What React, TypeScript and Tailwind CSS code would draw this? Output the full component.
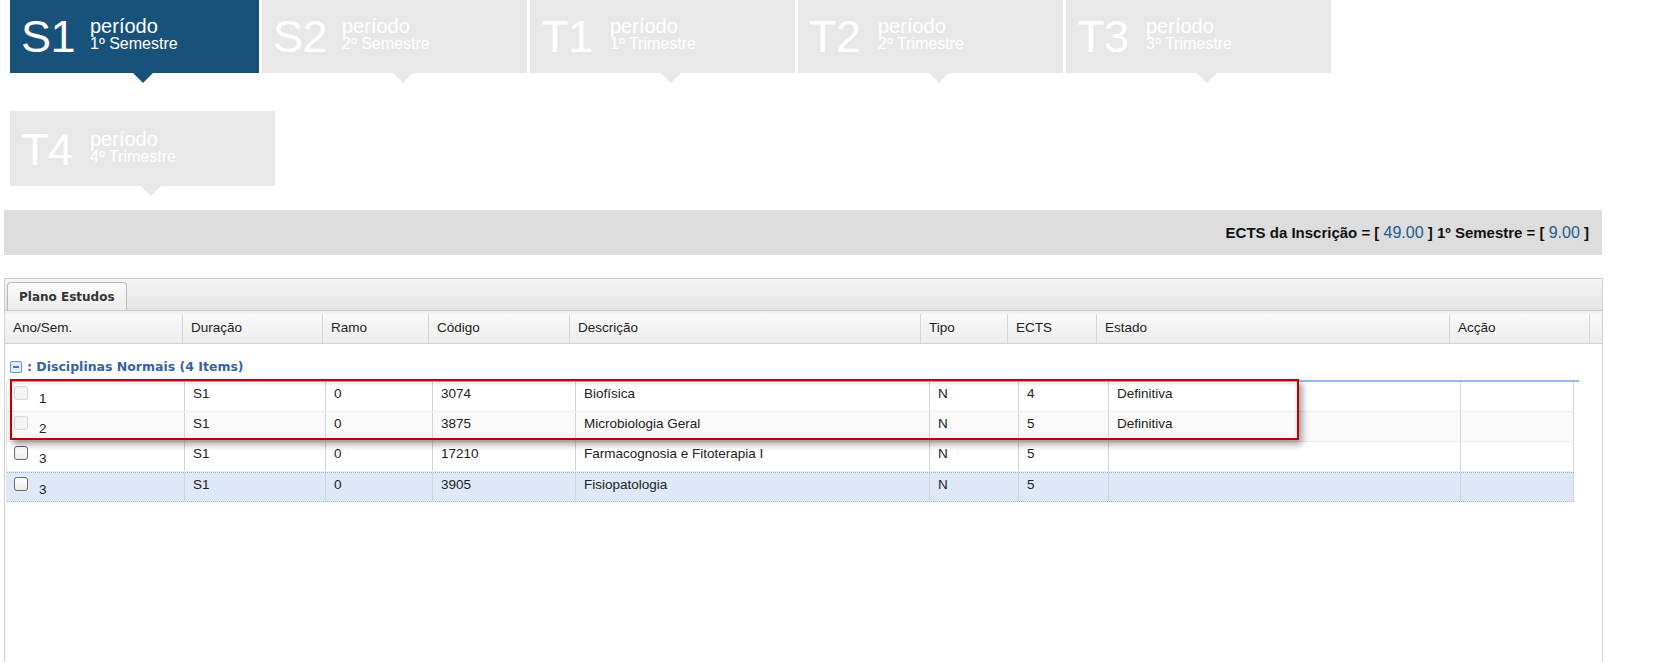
const periods = [
  { code: "S1", sub: "1º Semestre", active: true },
  { code: "S2", sub: "2º Semestre" },
  { code: "T1", sub: "1º Trimestre" },
  { code: "T2", sub: "2º Trimestre" },
  { code: "T3", sub: "3º Trimestre" },
  { code: "T4", sub: "4º Trimestre" },
];

const headerCols = [
  { label: "Ano/Sem.", w: "w-[178px]" },
  { label: "Duração", w: "w-[140px]" },
  { label: "Ramo", w: "w-[106px]" },
  { label: "Código", w: "w-[141px]" },
  { label: "Descrição", w: "w-[351px]" },
  { label: "Tipo", w: "w-[87px]" },
  { label: "ECTS", w: "w-[89px]" },
  { label: "Estado", w: "w-[353px]" },
  { label: "Acção", w: "w-[140px]" },
];

const bodyWidths = ["w-[178px]", "w-[141px]", "w-[107px]", "w-[143px]", "w-[354px]", "w-[89px]", "w-[90px]", "w-[352px]", "w-[113px]"];

const rows = [
  { ano: "1", dur: "S1", ramo: "0", cod: "3074", desc: "Biofísica", tipo: "N", ects: "4", estado: "Definitiva", locked: true, bg: "bg-white border-b border-[#ececec]" },
  { ano: "2", dur: "S1", ramo: "0", cod: "3875", desc: "Microbiologia Geral", tipo: "N", ects: "5", estado: "Definitiva", locked: true, bg: "bg-[#fafafa] border-b border-[#ececec]" },
  { ano: "3", dur: "S1", ramo: "0", cod: "17210", desc: "Farmacognosia e Fitoterapia I", tipo: "N", ects: "5", estado: "", locked: false, bg: "bg-white border-b border-[#ececec]" },
  { ano: "3", dur: "S1", ramo: "0", cod: "3905", desc: "Fisiopatologia", tipo: "N", ects: "5", estado: "", locked: false, bg: "bg-[#dfe8f6] border-y border-dotted border-[#8fb0e6]" },
];

function PeriodTab({ code, sub, active }: { code: string; sub: string; active?: boolean }) {
  const bg = active ? "bg-[#18527a]" : "bg-[#e8e8e8]";
  return (
    <div className={`relative h-[75px] ${active ? "w-[249px]" : "w-[265px]"} ${bg} flex items-center pl-[11px] text-white`}>
      <div className="w-[69px] text-[45px] leading-none tracking-[-0.5px] mt-[2px]">{code}</div>
      <div className="flex flex-col -mt-[3px]">
        <span className="text-[20px] leading-[18px]">período</span>
        <span className="text-[16px] leading-[17px]">{sub}</span>
      </div>
      <span
        className={`absolute top-full left-[calc(50%-2px)] w-0 h-0 border-l-[10px] border-r-[10px] border-t-[10px] border-l-transparent border-r-transparent ${
          active ? "border-t-[#18527a]" : "border-t-[#e8e8e8]"
        }`}
      />
    </div>
  );
}

function Checkbox({ locked }: { locked: boolean }) {
  return (
    <span
      className={`block w-[14px] h-[14px] rounded-[3px] border ${
        locked ? "border-[#d6d6d6] bg-[#f5f5f5]" : "border-[#6a6a6a] bg-gradient-to-b from-white to-[#ececec]"
      }`}
    />
  );
}

export default function App() {
  return (
    <div className="relative w-[1656px] h-[662px] overflow-hidden bg-white font-['Liberation_Sans',Arial,sans-serif]">
      {/* period tabs */}
      <div className="flex flex-wrap w-[1340px] pl-[10px] gap-x-[3px] gap-y-[38px] -mt-[2px]">
        {periods.map((p) => (
          <PeriodTab key={p.code} {...p} />
        ))}
      </div>

      {/* ECTS summary */}
      <div className="mt-[24px] ml-[4px] w-[1598px] h-[45px] bg-[#dddddd] flex items-center justify-end pr-[13px] text-[15px] font-bold text-[#111]">
        <span>
          ECTS da Inscrição = [ <span className="font-normal text-[16px] text-[#1f5a8a]">49.00</span> ] 1º Semestre = [{" "}
          <span className="font-normal text-[16px] text-[#1f5a8a]">9.00</span> ]
        </span>
      </div>

      {/* Plano Estudos panel */}
      <div className="mt-[23px] ml-[4px] w-[1599px] h-[420px] border border-[#d0d0d0]">
        <div className="h-[31px] bg-gradient-to-b from-[#f5f5f5] to-[#e4e4e4] flex items-end pl-[2px]">
          <div className="h-[28px] px-[11px] flex items-center border border-b-0 border-[#b9b9b9] rounded-t-[4px] bg-gradient-to-b from-[#fbfbfb] to-[#ececec] font-['DejaVu_Sans',Verdana,sans-serif] font-bold text-[12px] text-[#333]">
            Plano Estudos
          </div>
        </div>
        <div className="h-[4px] bg-[#f2f2f2] border-t border-[#c9c9c9]" />

        {/* header */}
        <div className="flex h-[30px] bg-gradient-to-b from-[#f9f9f9] to-[#ededed] border-b border-[#d0d0d0] text-[13.5px] text-[#222]">
          {headerCols.map((c) => (
            <div key={c.label} className={`${c.w} shrink-0 flex items-center pl-[8px] border-r border-[#d6d6d6]`}>
              {c.label}
            </div>
          ))}
          <div className="w-[10px] shrink-0" />
        </div>

        {/* group */}
        <div className="ml-[5px] w-[1569px] h-[38px] border-b-2 border-[#99bbe8] flex items-end pb-[5px] font-['DejaVu_Sans',Verdana,sans-serif] font-bold text-[12.5px] text-[#3764a0]">
          <svg width="12" height="12" viewBox="0 0 12 12" className="mb-[2px] mr-[5px]">
            <rect x="0.5" y="0.5" width="11" height="11" rx="1.5" fill="#e4ecf7" stroke="#6f8fbf" />
            <line x1="3" y1="6" x2="9" y2="6" stroke="#2f568e" strokeWidth="1.6" />
          </svg>
          <span className="leading-[16px]">: Disciplinas Normais (4 Items)</span>
        </div>

        {/* rows */}
        <div className="ml-[1px] w-[1568px] border-l border-[#e4e4e4] text-[13.5px] text-[#222]">
          {rows.map((r, i) => {
            const cells = [r.dur, r.ramo, r.cod, r.desc, r.tipo, r.ects, r.estado, ""];
            return (
              <div key={i} className={`flex h-[30px] ${r.bg}`}>
                <div className={`${bodyWidths[0]} shrink-0 flex items-start pt-[4px] pl-[7px] border-r border-[#d4d4d4]`}>
                  <Checkbox locked={r.locked} />
                  <span className="ml-[11px] mt-[5px] leading-[15px]">{r.ano}</span>
                </div>
                {cells.map((c, j) => (
                  <div key={j} className={`${bodyWidths[j + 1]} shrink-0 pt-[4px] pl-[8px] leading-[15px] border-r border-[#d4d4d4]`}>
                    {c}
                  </div>
                ))}
              </div>
            );
          })}
        </div>
      </div>

      {/* annotation box */}
      <div className="absolute left-[10px] top-[379px] w-[1289px] h-[61px] border-2 border-[#c00000] shadow-[3px_4px_7px_rgba(0,0,0,0.4),inset_0_2px_4px_rgba(0,0,0,0.15)]" />
    </div>
  );
}
